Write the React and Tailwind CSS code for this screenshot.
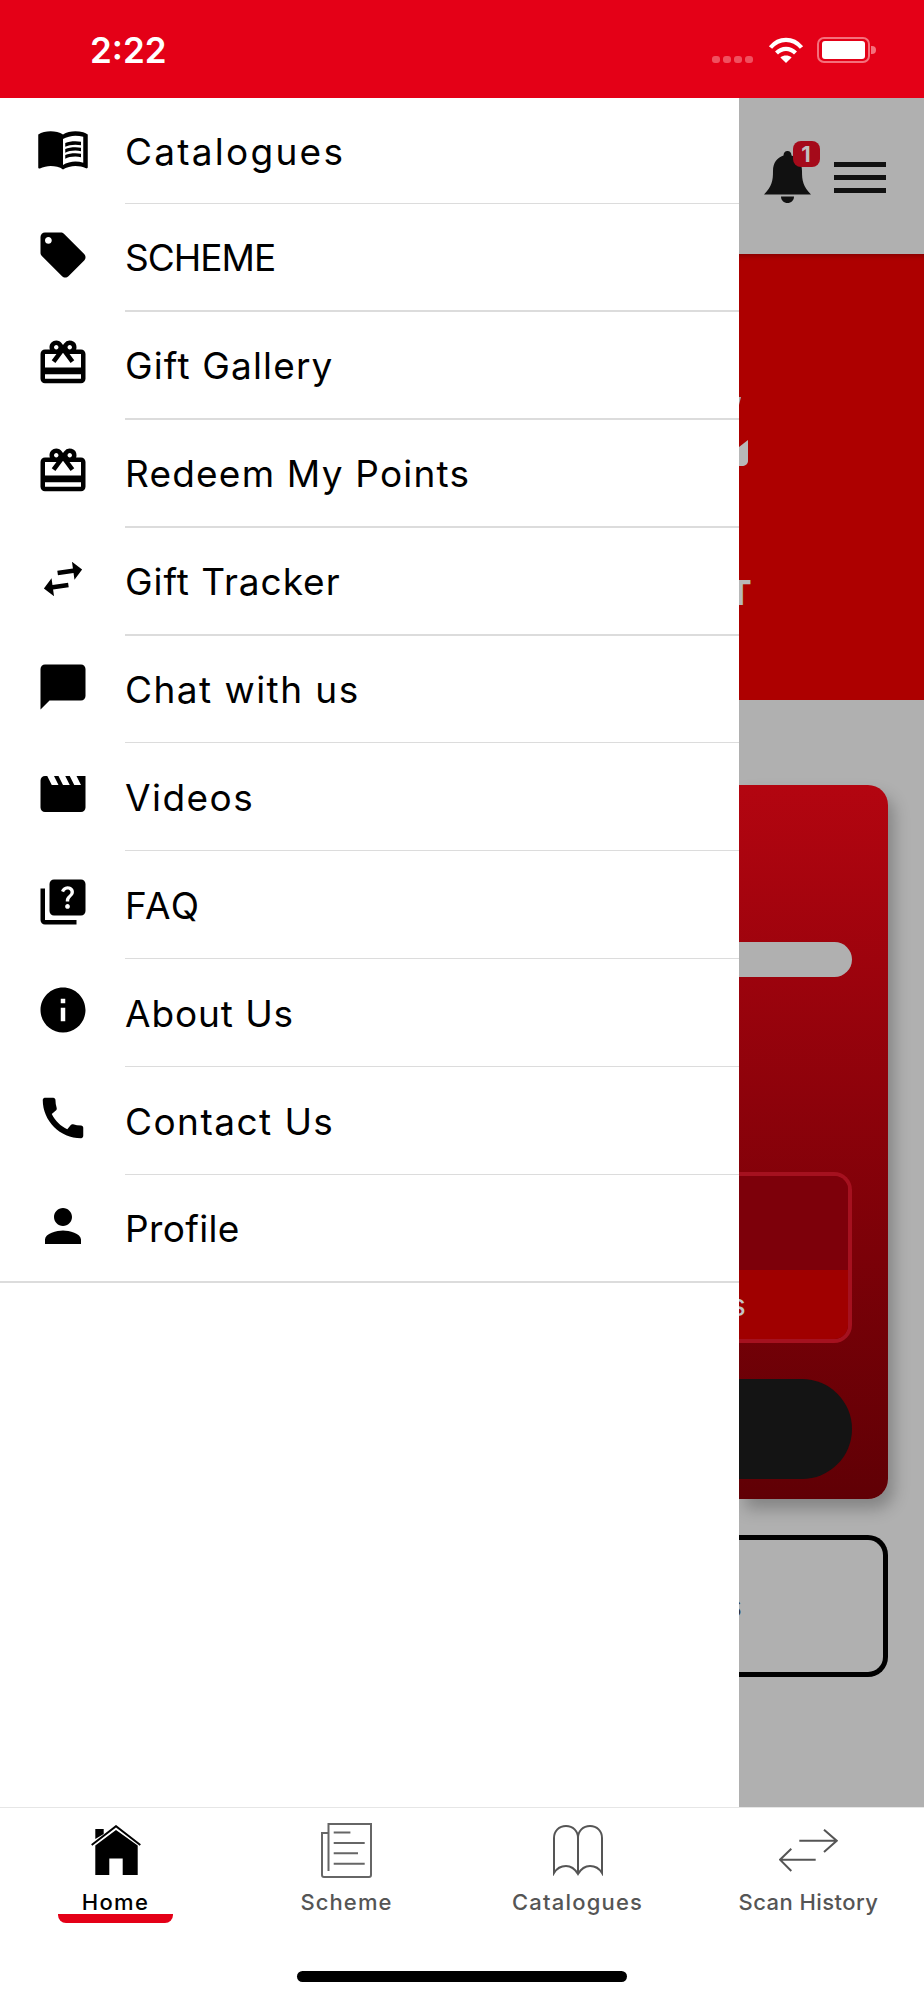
import React from 'react';
import { MdMenuBook, MdLocalOffer, MdCardGiftcard, MdSwapHoriz, MdChatBubble, MdMovie, MdQuiz, MdInfo, MdCall, MdPerson } from 'react-icons/md';

// Poppins isn't installed, so each label gets its own tracking to keep the reference's width
const menuItems = [
  { label: 'Catalogues', Icon: MdMenuBook, tracking: 'tracking-[2.25px]' },
  { label: 'SCHEME', Icon: MdLocalOffer, tracking: 'tracking-[-1px]' },
  { label: 'Gift Gallery', Icon: MdCardGiftcard, tracking: 'tracking-[1.15px]' },
  { label: 'Redeem My Points', Icon: MdCardGiftcard, tracking: 'tracking-[1.2px]' },
  { label: 'Gift Tracker', Icon: MdSwapHoriz, tracking: 'tracking-[0.95px]', tilt: true },
  { label: 'Chat with us', Icon: MdChatBubble, tracking: 'tracking-[1.45px]' },
  { label: 'Videos', Icon: MdMovie, tracking: 'tracking-[1.45px]' },
  { label: 'FAQ', Icon: MdQuiz, tracking: 'tracking-[1.5px]' },
  { label: 'About Us', Icon: MdInfo, tracking: 'tracking-[0.9px]' },
  { label: 'Contact Us', Icon: MdCall, tracking: 'tracking-[1.45px]' },
  { label: 'Profile', Icon: MdPerson, tracking: 'tracking-[0.35px]' },
];

const HomeIcon = () => (
  <svg width="50" height="50" viewBox="0 0 50 50">
    <path d="M4.3 50V20.5L25 5l21.7 15.5V50H31.7V33.5H18.3V50z" fill="#000" />
    <path d="M4.3 14V4h8.4v5z" fill="#000" />
    <path d="M0.7 20L25 1.2 49.3 20" fill="none" stroke="#000" strokeWidth="2" />
  </svg>
);

const SchemeIcon = () => (
  <svg width="51" height="55" viewBox="0 0 51 55" fill="none" stroke="#666" strokeWidth="2">
    <path d="M7.5 48V1H50v51a2 2 0 0 1-2 2H3a2 2 0 0 1-2-2V10h6.5" />
    <path d="M12.7 9.5h16.7M12.7 20h31M12.7 30.3h24.3M12.7 40.7h31" />
  </svg>
);

const BookIcon = () => (
  <svg width="50" height="51" viewBox="0 0 50 51" fill="none" stroke="#555" strokeWidth="2">
    <path d="M25 49V13C25 6 20 1 13 1S1 6 1 13v35c3-5 7-7 12-7s9 3 12 8c3-5 7-8 12-8s9 2 12 7V13C49 6 44 1 37 1S25 6 25 13" />
  </svg>
);

const SwapIcon = () => (
  <svg width="59" height="43" viewBox="0 0 59 43" fill="none" stroke="#555" strokeWidth="2">
    <path d="M20.3 11.7H57M45 .7l12.7 11L45 23M36.7 30.7H1.4M12.3 19.7L1 30.7 12.3 42" />
  </svg>
);

const WifiIcon = () => (
  <svg width="36" height="26" viewBox="0 0 36 26" fill="none" stroke="#fff" strokeWidth="4.2">
    <path d="M2.5 10.5C11 .3 25 .3 33.5 10.5" />
    <path d="M8.5 16c5.5-5.5 13.5-5.5 19 0" />
    <path d="M18 26l-5.6-5.6c3.2-2.4 8-2.4 11.2 0z" fill="#fff" stroke="none" />
  </svg>
);

const BellIcon = () => (
  <svg width="47" height="52" viewBox="0 0 47 52" fill="#111111">
    <path d="M23.5 0c-2.5 0-4 2-4 4.5C13 6.5 9 12 9 20c0 10-1 15-9 23.5h47C39 35 38 30 38 20c0-8-4-13.5-10.5-15.5C27.5 2 26 0 23.5 0z" />
    <path d="M17 45.5h13c0 4-3 6.5-6.5 6.5S17 49.5 17 45.5z" />
  </svg>
);

const BottomTab = ({ label, tracking, active, children }) => (
  <div className="w-[231px] flex flex-col items-center">
    <div className="h-[72px] flex items-center justify-center">{children}</div>
    <span className={`mt-[1px] text-[22px] leading-[30px] font-medium ${tracking} ${active ? 'text-black' : 'text-[#555555]'}`}>{label}</span>
    {active && <div className="w-[115px] h-[9px] bg-[#e40017] rounded-b-[8px] -mt-[3px]" />}
  </div>
);

export default function App() {
  return (
    <div className="w-[924px] h-[2000px] flex flex-col bg-white font-['Inter',sans-serif] overflow-hidden">
      {/* Status bar */}
      <div className="h-[98px] flex-shrink-0 bg-[#e40017] flex items-start pt-[37px] pl-[90px] pr-[48px]">
        <span className="text-white text-[35px] leading-[26px] font-semibold">2:22</span>
        <div className="ml-auto flex items-start">
          <div className="flex gap-[3px] mt-[19px] mr-[15px]">
            <div className="w-[8px] h-[7px] rounded-[3px] bg-[#f0505f]" />
            <div className="w-[8px] h-[7px] rounded-[3px] bg-[#f0505f]" />
            <div className="w-[8px] h-[7px] rounded-[3px] bg-[#f0505f]" />
            <div className="w-[8px] h-[7px] rounded-[3px] bg-[#f0505f]" />
          </div>
          <WifiIcon />
          <div className="ml-[13px] w-[53px] h-[26px] rounded-[7px] border-2 border-[#f4707c] py-[2px] px-[3px]">
            <div className="w-full h-full bg-white rounded-[3px]" />
          </div>
          <div className="w-[5px] h-[8px] mt-[9px] ml-[1px] rounded-r-[4px] bg-[#f4707c]" />
        </div>
      </div>

      <div className="flex-1 flex min-h-0">
        {/* Drawer */}
        <div className="w-[739px] flex-shrink-0 bg-white">
          {menuItems.map(({ label, Icon, tracking, tilt }, i) => (
            <div key={label} className={`relative flex items-center ${i === 0 ? 'h-[106px]' : 'h-[107.9px]'}`}>
              <div className="w-[125px] flex-shrink-0 pl-[35.5px] pb-[6px]">
                <Icon size={54} className={tilt ? '-rotate-[8deg]' : ''} color="#000" />
              </div>
              <span className={`text-[37px] leading-none text-black ${tracking}`}>{label}</span>
              <div className={`absolute bottom-0 right-0 h-[1.5px] bg-[#dcdcdc] ${i === menuItems.length - 1 ? 'left-0' : 'left-[125px]'}`} />
            </div>
          ))}
        </div>

        {/* Screen behind the drawer, dimmed */}
        <div className="flex-1 bg-[#b0b0b0] overflow-hidden flex flex-col">
          <div className="h-[156px] flex-shrink-0 relative">
            <div className="absolute left-[25px] top-[53px]"><BellIcon /></div>
            <div className="absolute left-[53.5px] top-[43px] w-[27px] h-[26px] rounded-[8px] bg-[#a50a1a] flex items-center justify-center text-[#c0c0c0] text-[22px] font-bold leading-none">1</div>
            <div className="absolute left-[95px] top-[64px] w-[52px] flex flex-col gap-[8px]">
              <div className="h-[5px] bg-[#111111]" />
              <div className="h-[5px] bg-[#111111]" />
              <div className="h-[5px] bg-[#111111]" />
            </div>
          </div>

          <div className="h-[446px] flex-shrink-0 relative bg-[#ad0000] overflow-hidden shadow-[inset_0_5px_4px_-3px_#860000]">
            <svg className="absolute left-0 top-[143px]" width="2" height="8" viewBox="0 0 2 8">
              <path d="M0 0h2L0 8z" fill="#b0b0b0" />
            </svg>
            <svg className="absolute left-0 top-[186px]" width="9" height="26" viewBox="0 0 9 26">
              <path d="M0 7L9 0v21c0 3-3 5-6 5H0z" fill="#b8b8b8" />
            </svg>
            <span className="absolute -left-[10px] top-[322px] text-[#b8b8b8] text-[34px] leading-[34px] font-bold">T</span>
          </div>

          {/* Points card */}
          <div className="mt-[85px] mr-[36px] h-[714px] flex-shrink-0 rounded-r-[20px] bg-gradient-to-b from-[#b30510] to-[#600005] shadow-[6px_10px_16px_rgba(0,0,0,0.25)] pr-[36px] pt-[157px]">
            <div className="h-[35px] rounded-r-full bg-[#b0b0b0]" />
            <div className="mt-[195px] h-[171px] rounded-r-[18px] border-y-4 border-r-4 border-[#a5111f] overflow-hidden flex flex-col">
              <div className="flex-1 bg-[#7d000a]" />
              <div className="h-[69px] bg-[#a00000] flex items-center">
                <span className="-ml-[9px] text-[30px] leading-none text-[#c4c4c4]">s</span>
              </div>
            </div>
            <div className="mt-[36px] h-[100px] rounded-r-[50px] bg-[#141414]" />
          </div>

          <div className="mt-[36px] mr-[36px] h-[142px] flex-shrink-0 rounded-r-[20px] border-y-[5px] border-r-[5px] border-black flex items-center">
            <span className="-ml-[13px] text-[30px] leading-none text-[#333333]">s</span>
          </div>
        </div>
      </div>

      {/* Bottom tabs */}
      <div className="h-[193px] flex-shrink-0 relative bg-white border-t border-[#e6e6e6]">
        <div className="flex pt-[6px]">
          <BottomTab label="Home" tracking="tracking-[1.3px]" active><HomeIcon /></BottomTab>
          <BottomTab label="Scheme" tracking="tracking-[1.1px]"><SchemeIcon /></BottomTab>
          <BottomTab label="Catalogues" tracking="tracking-[1.2px]"><BookIcon /></BottomTab>
          <BottomTab label="Scan History" tracking="tracking-[0.45px]"><SwapIcon /></BottomTab>
        </div>
        <div className="absolute left-[297px] bottom-[18px] w-[330px] h-[11px] rounded-full bg-black" />
      </div>
    </div>
  );
}
